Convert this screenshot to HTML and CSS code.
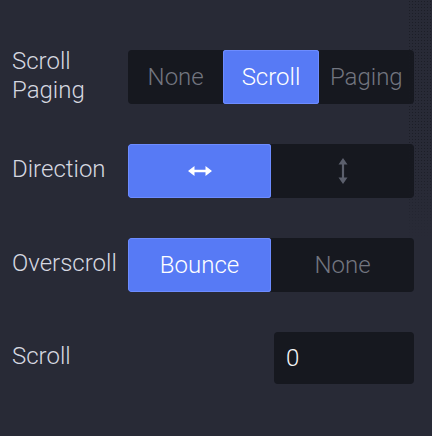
FILE: index.html
```html
<!DOCTYPE html>
<html>
<head>
  <title>Scroll Settings</title>
  <link rel="stylesheet" href="styles.css">
</head>
<body>
  <div class="panel">
    <div class="row">
      <div class="label">Scroll Paging</div>
      <div class="segmented three">
        <button type="button" class="seg">None</button>
        <button type="button" class="seg active">Scroll</button>
        <button type="button" class="seg">Paging</button>
      </div>
    </div>
    <div class="row">
      <div class="label">Direction</div>
      <div class="segmented">
        <button type="button" class="seg active">
          <svg width="24" height="12" viewBox="0 0 24 12">
            <path d="M5 6 H19" stroke="#fff" stroke-width="2.4"/>
            <path d="M0 6 L6.5 1 L6.5 11 Z M24 6 L17.5 1 L17.5 11 Z" fill="#fff"/>
          </svg>
        </button>
        <button type="button" class="seg">
          <svg width="10" height="26" viewBox="0 0 10 26">
            <path d="M5 5 V21" stroke="#5b5f6c" stroke-width="2.2"/>
            <path d="M5 0 L0.5 6.5 L9.5 6.5 Z M5 26 L0.5 19.5 L9.5 19.5 Z" fill="#5b5f6c"/>
          </svg>
        </button>
      </div>
    </div>
    <div class="row">
      <div class="label">Overscroll</div>
      <div class="segmented">
        <button type="button" class="seg active">Bounce</button>
        <button type="button" class="seg">None</button>
      </div>
    </div>
    <div class="row short">
      <div class="label">Scroll</div>
      <input class="num" type="text" value="0">
    </div>
  </div>
  <div class="dots"></div>
</body>
</html>
```

FILE: styles.css
```css
body {
  margin: 0;
  padding: 0;
  background-color: #282a36;
  font-family: Roboto, "Liberation Sans", sans-serif;
  font-weight: 300;
  height: 436px;
  overflow: hidden;
  position: relative;
}

.panel {
  display: flex;
  flex-direction: column;
  gap: 40px;
  padding: 50px 18px 0 12px;
}

.row {
  display: grid;
  grid-template-columns: 110px 1fr;
  grid-template-rows: 54px;
  column-gap: 6px;
  align-items: center;
}

.row.short {
  grid-template-rows: 52px;
}

.label {
  color: #d6d8e0;
  font-size: 24px;
  line-height: 29px;
  margin-bottom: 3px;
}

.segmented {
  display: flex;
  height: 54px;
  background-color: #16181f;
  border-radius: 4px;
  overflow: hidden;
}

.seg {
  flex: 1;
  border: none;
  background: none;
  padding: 0;
  margin: 0;
  font-family: inherit;
  font-weight: inherit;
  font-size: 24px;
  color: #72757f;
  display: flex;
  align-items: center;
  justify-content: center;
  cursor: pointer;
}

.seg.active {
  background-color: #577af5;
  box-shadow: inset 0 0 0 1px #6d8cff;
  color: #fff;
  border-radius: 3px;
}

.num {
  justify-self: end;
  width: 140px;
  height: 52px;
  box-sizing: border-box;
  border: none;
  border-radius: 4px;
  background-color: #16181f;
  color: #f4f5f8;
  font-family: inherit;
  font-weight: inherit;
  font-size: 24px;
  padding: 0 12px;
  outline: none;
}

.dots {
  position: absolute;
  top: 0;
  right: 0;
  width: 24px;
  height: 240px;
  background-image: radial-gradient(circle, #181a22 0.7px, transparent 1px);
  background-size: 3px 3px;
  -webkit-mask-image: linear-gradient(to bottom, #000 70%, transparent);
  mask-image: linear-gradient(to bottom, #000 70%, transparent);
  opacity: 0.7;
  pointer-events: none;
}
```
